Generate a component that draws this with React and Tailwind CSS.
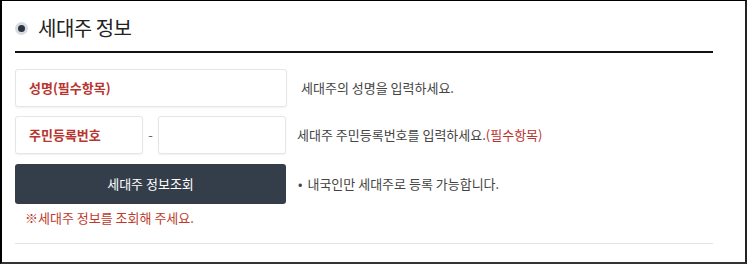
import React from 'react'

const font = { fontFamily: '"Noto Sans CJK KR", "Noto Sans", sans-serif' }

function Field({ label, className = '' }) {
  return (
    <div className={`h-[38px] flex items-center px-[13px] bg-white border border-[#e6e6e6] rounded-[3px] shadow-[0_1px_2px_rgba(0,0,0,0.06)] ${className}`}>
      {label && <span className="text-[13px] font-bold text-[#b8352f]">{label}</span>}
    </div>
  )
}

export default function App() {
  return (
    <div className="w-[750px] h-[264px] bg-white" style={font}>
      <div className="w-[747px] h-[264px] border-t border-l-2 border-r-2 border-b-2 border-t-black border-l-black border-r-[#222] border-b-[#333] pl-[13px]">
        {/* Header */}
        <div className="h-[50px] pt-[4px] flex items-center gap-[10px]">
          <span className="w-[13px] h-[13px] rounded-full bg-[#d8dbe1] flex items-center justify-center">
            <span className="w-[7px] h-[7px] rounded-full bg-[#2c3440]" />
          </span>
          <h2 className="text-[20px] font-normal text-[#222] tracking-tight">세대주 정보</h2>
        </div>
        <div className="w-[698px] h-[2px] bg-[#111]" />

        {/* 성명 */}
        <div className="mt-[16px] flex items-center">
          <Field label="성명(필수항목)" className="w-[272px]" />
          <p className="ml-[14px] text-[13px] text-[#444]">세대주의 성명을 입력하세요.</p>
        </div>

        {/* 주민등록번호 */}
        <div className="mt-[9px] flex items-center">
          <Field label="주민등록번호" className="w-[128px]" />
          <span className="w-[15px] text-center text-[13px] text-[#666]">-</span>
          <Field className="w-[128px]" />
          <p className="ml-[11px] text-[13px] text-[#444]">
            세대주 주민등록번호를 입력하세요.<span className="text-[#b8352f]">(필수항목)</span>
          </p>
        </div>

        {/* 조회 */}
        <div className="mt-[10px] flex items-center">
          <button className="w-[271px] h-[40px] rounded-[3px] bg-[#343e4b] text-white text-[13px]">
            세대주 정보조회
          </button>
          <p className="ml-[12px] text-[13px] text-[#444]">
            <span className="mr-[5px]">•</span>내국인만 세대주로 등록 가능합니다.
          </p>
        </div>
        <div className="mt-[4px] h-[20px] pl-[10px] flex items-center text-[13px] text-[#c0392b]">
          ※세대주 정보를 조회해 주세요.
        </div>

        <div className="mt-[15px] w-[698px] h-px bg-[#e4e4e4]" />
      </div>
    </div>
  )
}
